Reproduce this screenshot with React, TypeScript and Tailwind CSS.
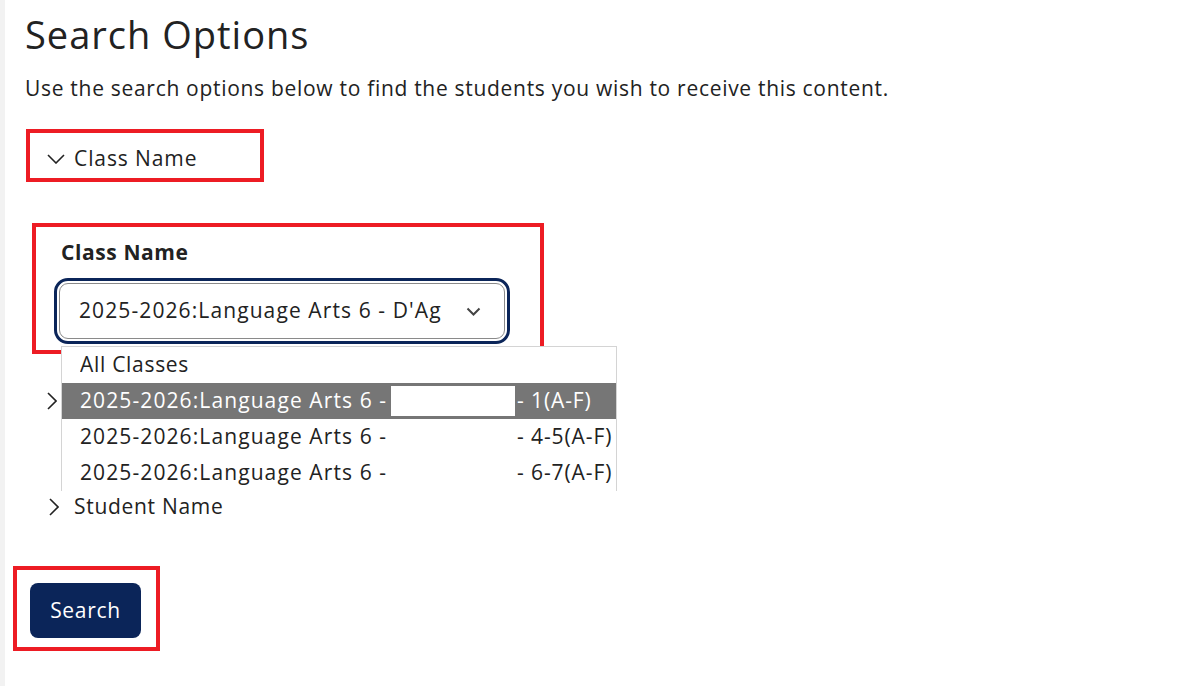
import { FC } from "react";

const font = { fontFamily: "'Open Sans', 'Noto Sans', sans-serif" };

const ChevronDown: FC<{ className?: string }> = ({ className }) => (
  <svg className={className} viewBox="0 0 18 10" fill="none">
    <path d="M1 1l8 8 8-8" stroke="#222" strokeWidth="1.6" />
  </svg>
);

const ChevronRight: FC<{ className?: string }> = ({ className }) => (
  <svg className={className} viewBox="0 0 10 18" fill="none">
    <path d="M1 1l8 8-8 8" stroke="#222" strokeWidth="1.6" />
  </svg>
);

const options = [
  { left: "All Classes", right: "" },
  { left: "2025-2026:Language Arts 6 -", right: "- 1(A-F)" },
  { left: "2025-2026:Language Arts 6 -", right: "- 4-5(A-F)" },
  { left: "2025-2026:Language Arts 6 -", right: "- 6-7(A-F)" },
];

const App = () => {
  return (
    <div
      className="min-h-[686px] w-[1192px] bg-white border-l-[5px] border-l-[#f2f2f2] text-[#222] text-[21px] tracking-[0.7px]"
      style={font}
    >
      <div className="pl-[20px]">
        <h1 className="pt-[11px] h-[58px] text-[38px] leading-[46px] font-normal tracking-[1px]">Search Options</h1>

        <p className="mt-[16px] h-[28px] leading-[28px]">
          Use the search options below to find the students you wish to receive this content.
        </p>

        {/* accordion header */}
        <div className="mt-[27px] ml-[1px] w-[238px] h-[53px] border-4 border-[#ed1c24] flex items-center pt-[6px]">
          <ChevronDown className="ml-[17px] w-[18px] h-[10px]" />
          <span className="ml-[9px] tracking-[0.9px]">Class Name</span>
        </div>

        {/* class select */}
        <div className="mt-[41px] ml-[7px] w-[512px] h-[131px] border-4 border-[#ed1c24] pl-[23px] pt-[11px]">
          <div className="pl-[2px] h-[28px] leading-[28px] font-bold tracking-[0.6px]">Class Name</div>
          <div className="relative mt-[17px]">
            <div className="w-[446px] h-[56px] border border-[#8a8a8a] rounded-[9px] outline-3 outline-[#0b2559] outline-offset-2 flex items-center">
              <span className="ml-[19px] w-[371px] overflow-hidden whitespace-nowrap tracking-[1.1px]">
                2025-2026:Language Arts 6 - D'Ag
              </span>
              <svg className="ml-[16px] w-[15px] h-[9px]" viewBox="0 0 15 9" fill="none">
                <path d="M1.5 1.5l6 6 6-6" stroke="#444" strokeWidth="2" />
              </svg>
            </div>

            {/* open listbox */}
            <div className="absolute z-10 left-[2px] top-[63px] w-[556px] h-[145px] bg-white border-l border-t border-r border-[#d4d4d4] overflow-hidden">
              {options.map((o, i) => (
                <div
                  key={i}
                  className={`h-[36px] flex items-center pl-[18px] whitespace-nowrap ${
                    i === 1 ? "bg-[#767676] text-white" : "bg-white"
                  }`}
                >
                  <span className={`w-[313px] overflow-hidden ${i === 0 ? "" : "tracking-[1.1px]"}`}>{o.left}</span>
                  {i === 1 ? (
                    <span className="w-[124px] h-[30px] bg-white -ml-[2px] mr-[2px]" />
                  ) : (
                    <span className="w-[124px]" />
                  )}
                  <span className="tracking-[0.9px]">{o.right}</span>
                </div>
              ))}
            </div>
          </div>
        </div>

        {/* collapsed accordion items (first label sits under the open list) */}
        <div className="mt-[37px] h-[20px] flex items-center">
          <ChevronRight className="ml-[22px] w-[10px] h-[18px]" />
        </div>
        <div className="mt-[86px] h-[20px] flex items-center">
          <ChevronRight className="ml-[24px] w-[10px] h-[18px]" />
          <span className="ml-[15px]">Student Name</span>
        </div>

        <div className="mt-[49px] -ml-[12px] w-[147px] h-[85px] border-4 border-[#ed1c24] pl-[13px] pt-[13px]">
          <button className="w-[111px] h-[55px] rounded-[8px] bg-[#0b2559] text-white tracking-[0.7px]">
            Search
          </button>
        </div>
      </div>
    </div>
  );
};

export default App;
